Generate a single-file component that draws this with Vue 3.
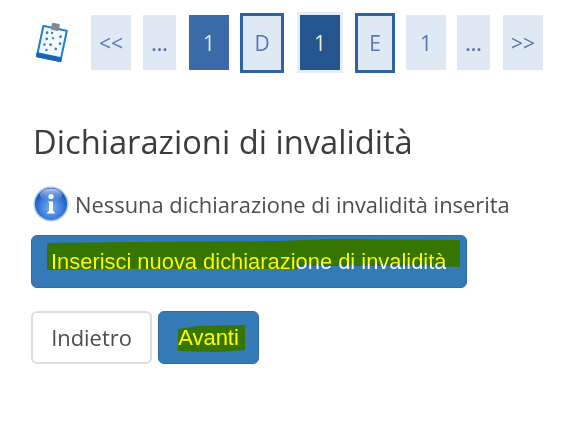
<script setup>
const pages = [
  { label: '<<', cls: 'wide' },
  { label: '...', cls: 'narrow dots' },
  { label: '1', cls: 'wide done' },
  { label: 'D', cls: 'framed d' },
  { label: '1', cls: 'current' },
  { label: 'E', cls: 'framed e' },
  { label: '1', cls: 'wide after' },
  { label: '...', cls: 'narrow dots' },
  { label: '>>', cls: 'wide' }
]
</script>

<template>
  <main class="page">
    <nav class="steps">
      <svg class="clip" width="36" height="42" viewBox="0 0 36 42">
        <g transform="rotate(12 18 21)">
          <rect x="5" y="5" width="26" height="33" rx="1.5" fill="#1b7fd0" />
          <rect x="5" y="33" width="26" height="5" rx="1" fill="#1668b4" />
          <rect x="7" y="7" width="22" height="26" fill="#f2f8fc" />
          <rect x="14" y="1" width="8" height="7" rx="1" fill="#7d8a92" />
          <g fill="#2c7fc8">
            <circle cx="11" cy="12" r="1.4" /><circle cx="16" cy="11" r="1.2" /><circle cx="25" cy="13" r="1.4" />
            <circle cx="12" cy="18" r="1.4" /><circle cx="18" cy="16" r="1.2" /><circle cx="26" cy="20" r="1.4" />
            <circle cx="11" cy="24" r="1.3" /><circle cx="17" cy="23" r="1.4" /><circle cx="23" cy="26" r="1.3" />
            <circle cx="14" cy="29" r="1.2" />
          </g>
        </g>
      </svg>
      <span v-for="(p, i) in pages" :key="i" class="step" :class="p.cls">{{ p.label }}</span>
    </nav>

    <h1 class="title">Dichiarazioni di invalidità</h1>

    <p class="info">
      <svg width="36" height="36" viewBox="0 0 36 36">
        <defs>
          <radialGradient id="ball" cx="50%" cy="62%" r="60%">
            <stop offset="0" stop-color="#7db0f0" />
            <stop offset="0.55" stop-color="#3f7fdd" />
            <stop offset="1" stop-color="#144fb0" />
          </radialGradient>
          <linearGradient id="shine" x1="0" y1="0" x2="0" y2="1">
            <stop offset="0" stop-color="#cfe2fb" stop-opacity="0.9" />
            <stop offset="1" stop-color="#6fa0e6" stop-opacity="0" />
          </linearGradient>
        </defs>
        <circle cx="18" cy="18" r="17.5" fill="#a9c6ee" />
        <circle cx="18" cy="18" r="16" fill="url(#ball)" />
        <ellipse cx="18" cy="9" rx="11" ry="6.5" fill="url(#shine)" />
        <circle cx="18" cy="10.5" r="2.6" fill="#fff" />
        <path d="M15 15.5h5v9.5l1.8 1.2v1.3h-7.6v-1.3l1.8-1.2v-8z" fill="#fff" />
      </svg>
      <span>Nessuna dichiarazione di invalidità inserita</span>
    </p>

    <button class="btn primary insert">
      <svg class="mark" width="414" height="33" viewBox="0 0 414 33"><polygon points="0,5 83,4 233,3 283,1 413,2 413,29 370,28 253,28 250,31 83,31 0,32" fill="#367600" /></svg>
      <span class="label"><span class="tint low">Inserisci nuova dichiarazi</span><span class="tint high">one di invalidità</span></span>
    </button>

    <div class="actions">
      <button class="btn back">Indietro</button>
      <button class="btn primary next">
        <svg class="mark" width="68" height="27" viewBox="0 0 68 27"><polygon points="0,4 20,1 67,0 67,25 40,27 0,26" fill="#367600" /></svg>
        <span class="label yellow">Avanti</span>
      </button>
    </div>
  </main>
</template>

<style scoped>
.page {
  width: 570px;
  height: 433px;
  box-sizing: border-box;
  padding: 12px 0 0 31px;
  overflow: hidden;
  background: #fff;
  color: #444;
  font-family: "Open Sans", sans-serif;
  filter: blur(0.3px);
}
.steps {
  display: flex;
  align-items: center;
  height: 61px;
}
.clip {
  margin: 0 21px 0 3px;
  flex: none;
}
.step {
  box-sizing: border-box;
  height: 55px;
  padding-top: 1px;
  display: flex;
  align-items: center;
  justify-content: center;
  background: #dfe9f4;
  color: #5878ad;
  font-size: 21px;
  flex: none;
}
.wide { width: 40px; margin-right: 12px; }
.narrow { width: 33px; margin-right: 13px; }
.dots { padding-top: 2px; font-size: 20px; font-weight: 600; }
.done { background: #3a6ba8; color: #d9ecf4; margin-right: 11px; }
.framed {
  height: 60px;
  border: 3px solid #2d62a3;
  background: #dfe9f4;
}
.d { width: 44px; margin-right: 13px; }
.e { width: 40px; margin-right: 11px; }
.current {
  box-sizing: content-box;
  width: 40px;
  height: 54px;
  border: 3px solid #e2edf7;
  background: #24558f;
  color: #e5f0dc;
  margin-right: 12px;
}
.after { margin-right: 11px; }
.title {
  margin: 50px 0 0 2px;
  font-size: 32.7px;
  font-weight: 400;
  line-height: 38px;
  color: #3c3c3c;
}
.info {
  display: flex;
  align-items: center;
  gap: 6px;
  margin: 25px 0 0 2px;
  height: 36px;
  font-size: 21.9px;
  color: #4c4c4c;
}
.btn {
  position: relative;
  box-sizing: border-box;
  display: block;
  border-radius: 6px;
  height: 53px;
  padding: 0;
  font-family: "Liberation Sans", Arial, sans-serif;
  font-size: 22px;
}
.primary {
  border: 1px solid #2e6da4;
  background: #337ab7;
  color: #fff;
}
.insert {
  width: 436px;
  margin-top: 13px;
  text-align: left;
}
.mark {
  position: absolute;
  pointer-events: none;
}
.insert .mark { left: 15px; top: 2px; }
.next .mark { left: 19px; top: 13px; }
.label { position: relative; }
.insert .label { margin-left: 19px; font-size: 21.9px; }
.yellow { color: #ffff00; }
.tint {
  color: transparent;
  -webkit-background-clip: text;
  background-clip: text;
}
.low { background-image: linear-gradient(#ffff00 80%, #ffffff 80%); }
.high { background-image: linear-gradient(#ffff00 62%, #ffffff 62%); }
.actions {
  display: flex;
  gap: 6px;
  margin-top: 23px;
}
.back {
  width: 121px;
  border: 2px solid #ddd;
  background: #fff;
  color: #4c4c4c;
  font-family: "Open Sans", sans-serif;
  font-size: 21.9px;
}
.next { width: 101px; }
</style>
